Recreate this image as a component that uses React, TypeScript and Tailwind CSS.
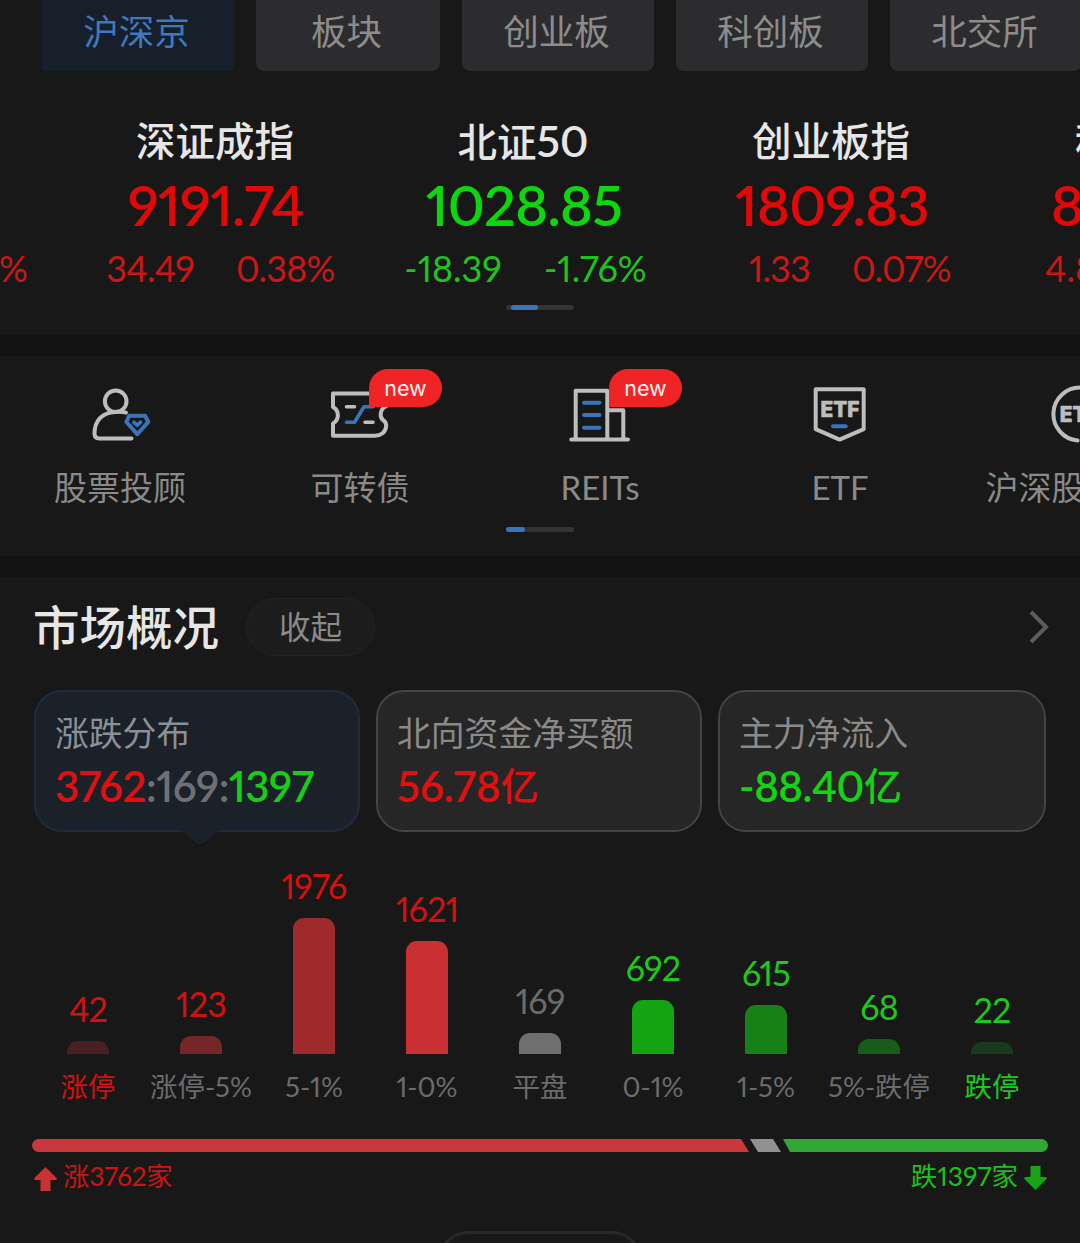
import React from 'react';
import clsx from 'clsx';

const tabs = [
  { label: '沪深京', width: 'w-[192px]', active: true },
  { label: '板块', width: 'w-[184px]' },
  { label: '创业板', width: 'w-[192px]' },
  { label: '科创板', width: 'w-[192px]' },
  { label: '北交所', width: 'w-[192px]' },
];

const indices = [
  { name: '深证成指', value: '9191.74', change: '34.49', percent: '0.38%', up: true },
  {
    name: <>北证<span className="text-[43px] font-semibold">50</span></>,
    value: '1028.85',
    change: '-18.39',
    percent: '-1.76%',
    up: false,
  },
  { name: '创业板指', value: '1809.83', change: '1.33', percent: '0.07%', up: true },
];

const bars = [
  { label: '涨停', count: 42, height: 13, bar: 'bg-[#481f22]', text: 'text-[#d51010]', labelText: 'text-[#d51010]' },
  { label: '涨停-5%', count: 123, height: 18, bar: 'bg-[#752628]', text: 'text-[#d51010]', labelText: 'text-[#6b6b6b]' },
  { label: '5-1%', count: 1976, height: 136, bar: 'bg-[#9f2a2c]', text: 'text-[#d51010]', labelText: 'text-[#6b6b6b]' },
  { label: '1-0%', count: 1621, height: 113, bar: 'bg-[#ca3031]', text: 'text-[#d51010]', labelText: 'text-[#6b6b6b]' },
  { label: '平盘', count: 169, height: 21, bar: 'bg-[#6f6f6f]', text: 'text-[#6b6b6b]', labelText: 'text-[#6b6b6b]' },
  { label: '0-1%', count: 692, height: 54, bar: 'bg-[#13a313]', text: 'text-[#1cc91c]', labelText: 'text-[#6b6b6b]' },
  { label: '1-5%', count: 615, height: 49, bar: 'bg-[#178017]', text: 'text-[#1cc91c]', labelText: 'text-[#6b6b6b]' },
  { label: '5%-跌停', count: 68, height: 15, bar: 'bg-[#185c19]', text: 'text-[#1cc91c]', labelText: 'text-[#6b6b6b]' },
  { label: '跌停', count: 22, height: 12, bar: 'bg-[#193a1b]', text: 'text-[#1cc91c]', labelText: 'text-[#1cc91c]' },
];

const iconProps = {
  width: 72,
  height: 64,
  viewBox: '0 0 72 64',
  fill: 'none',
  stroke: '#bdbdbd',
  strokeWidth: 4,
  strokeLinecap: 'round' as const,
  strokeLinejoin: 'round' as const,
};

const AdvisorIcon = () => (
  <svg {...iconProps}>
    <circle cx="31.7" cy="19.3" r="10.8" />
    <path d="M42 30.6 C39 29.6 36 29.8 31.5 29.9 C18 30.3 10.6 39 10.5 51.5 Q10.5 56.4 15.5 56.4 H47.5" />
    <path d="M45.2 33.8 H61.2 L64.3 40 L53.3 52.2 L42.3 40 Z" stroke="#3a74b9" />
    <path d="M50 40.3 L53.2 43.2 L56.4 40.3" stroke="#3a74b9" strokeWidth="3.8" />
  </svg>
);

const BondIcon = () => (
  <svg {...iconProps}>
    <path d="M62 24.5 C55.5 27 55.5 35.5 59 38 C62 40 62.6 42 62 45 C61.5 50 57 53.8 51 53.8 H9 V41.5 C15.5 38 15.5 28.5 9 25 V11.5 H62" />
    <path d="M22.5 24.7 H30.5 M41 40.3 H49" strokeWidth="3.6" />
    <path d="M22.5 40.3 H30.5 L40 24.7 H49" stroke="#3a74b9" strokeWidth="3.6" />
  </svg>
);

const ReitsIcon = () => (
  <svg {...iconProps}>
    <path d="M11.7 57.3 V8.7 H43.3 V57.3 M43.3 28.3 H59.3 V57.3 M7.2 57.5 H64" />
    <path d="M20 20.7 H35.5 M20 33 H35.5 M20 45.7 H35.5" stroke="#3a74b9" />
  </svg>
);

const EtfIcon = () => (
  <svg {...iconProps}>
    <path d="M11.7 7.3 H59.7 V47.2 L35.6 57.6 L11.7 47.2 Z" />
    <path d="M29 44.3 H41.7" stroke="#3a74b9" />
    <text x="16.5" y="35.2" textLength="39" lengthAdjust="spacingAndGlyphs" className="font-['Inter'] text-[22px] font-extrabold" fill="#bdbdbd" stroke="#bdbdbd" strokeWidth="0.7">
      ETF
    </text>
  </svg>
);

const ConnectEtfIcon = () => (
  <svg {...iconProps}>
    <path d="M33.6 58.6 A26.6 26.6 0 1 1 62.6 32.3" />
    <text x="15.8" y="40.3" textLength="39" lengthAdjust="spacingAndGlyphs" className="font-['Inter'] text-[22px] font-extrabold" fill="#bdbdbd" stroke="#bdbdbd" strokeWidth="0.7">
      ETF
    </text>
  </svg>
);

const entries = [
  { label: '股票投顾', icon: <AdvisorIcon /> },
  { label: '可转债', icon: <BondIcon />, isNew: true },
  { label: 'REITs', icon: <ReitsIcon />, isNew: true },
  { label: 'ETF', icon: <EtfIcon /> },
  { label: '沪深股通ETF', icon: <ConnectEtfIcon /> },
];

const Divider = () => <div className="h-[21px] shrink-0 bg-[#121212]" />;

const App = () => {
  return (
    <div className="w-[1080px] h-[1243px] overflow-hidden flex flex-col bg-[#181818] font-['Lato','Noto_Sans_CJK_SC',sans-serif] [font-variant-numeric:proportional-nums] whitespace-nowrap">
      {/* Market tabs */}
      <div className="flex gap-[22px] pl-[42px] h-[71px] shrink-0">
        {tabs.map((tab) => (
          <div
            key={tab.label}
            className={clsx(
              'shrink-0 h-[71px] pr-[3px] text-center text-[35.5px] leading-[63px]',
              tab.width,
              tab.active ? 'rounded-b bg-[#17202a] text-[#3f78bf]' : 'rounded-b-lg bg-[#2c2c2e] text-[#8c8c8c]'
            )}
          >
            {tab.label}
          </div>
        ))}
      </div>

      {/* Index quotes */}
      <div className="h-[264px] shrink-0 flex flex-col items-center">
        <div className="w-full flex pt-[43px]">
          <div className="w-[61px] shrink-0 pt-[130px] text-[36px] leading-[48px] text-[#cb1616]">
            <span className="-ml-[1px]">%</span>
          </div>
          {indices.map((item) => (
            <div key={item.value} className="w-[308px] shrink-0 text-center">
              <div className="h-[54px] text-[39.5px] leading-[54px] font-medium text-[#e6e6e6]">{item.name}</div>
              <div
                className={clsx(
                  'pl-[2px] text-[56px] leading-[74px] font-semibold tracking-[-0.7px]',
                  item.up ? 'text-[#e30808]' : 'text-[#0cd60c]'
                )}
              >
                {item.value}
              </div>
              <div
                className={clsx(
                  'mt-[2px] grid grid-cols-2 gap-[42px] text-[36px] leading-[48px]',
                  item.up ? 'text-[#cb1616] tracking-[-0.8px]' : 'text-[#1fc31f]'
                )}
              >
                <span className="text-right">{item.change}</span>
                <span className="text-left">{item.percent}</span>
              </div>
            </div>
          ))}
          <div className="w-[95px] shrink-0 overflow-hidden">
            <div className="pl-[90px] text-[39.5px] leading-[54px] font-medium text-[#e6e6e6]">科</div>
            <div className="pl-[66px] text-[56px] leading-[74px] font-semibold text-[#e30808]">8</div>
            <div className="mt-[2px] pl-[60px] text-[36px] leading-[48px] text-[#cb1616]">4.8</div>
          </div>
        </div>
        <div className="mt-[13px] w-[68px] h-[5px] rounded-full bg-[#333333] pl-[5px]">
          <div className="w-[27px] h-full rounded-full bg-[#3a74b9]" />
        </div>
      </div>

      <Divider />

      {/* Shortcuts */}
      <div className="h-[200px] shrink-0 flex flex-col items-center">
        <div className="w-full flex pt-[26px]">
          {entries.map((entry) => (
            <div key={entry.label} className="w-[240px] shrink-0 flex flex-col items-center">
              <div className="relative">
                {entry.icon}
                {entry.isNew && (
                  <span className="absolute left-[45px] -top-[13px] w-[73px] h-[38px] rounded-full rounded-bl-none bg-[#f12425] text-center font-['Inter'] text-[21.5px] leading-[39px] text-[#ffeeee]">
                    new
                  </span>
                )}
              </div>
              <div className="mt-[17px] text-[33px] leading-[48px] text-[#8a8a8a]">{entry.label}</div>
            </div>
          ))}
        </div>
        <div className="mt-[16px] w-[68px] h-[5px] rounded-full bg-[#333333]">
          <div className="w-[19px] h-full rounded-full bg-[#3a74b9]" />
        </div>
      </div>

      <Divider />

      {/* Market overview */}
      <div className="flex-1 flex flex-col pt-[21px]">
        <div className="flex items-center h-[58px] pl-[33px] pr-[31px]">
          <h2 className="w-[213px] text-[46.5px] leading-[58px] font-medium text-[#e6e6e6]">市场概况</h2>
          <button className="w-[129px] h-[58px] rounded-full border border-[#232323] bg-[#1c1c1c] text-[31.5px] leading-[56px] text-[#8a8a8a]">
            收起
          </button>
          <svg className="ml-auto" width="20" height="34" viewBox="0 0 20 34" fill="none" stroke="#5c5c5c" strokeWidth="4">
            <path d="M2 2 L17 17 L2 32" />
          </svg>
        </div>

        <div className="mt-[34px] ml-[34px] flex gap-4 text-[33.8px] leading-[48px]">
          <div className="relative w-[326px] h-[142px] rounded-[28px] border-2 border-[#202c3d] bg-[#1a2128] pl-[19px] pt-[17px] text-[#8b9097]">
            <div>涨跌分布</div>
            <div className="mt-[3px] text-[42px] leading-[52px] font-semibold tracking-[-0.5px] text-[#6d7176]">
              <span className="text-[#e01010]">3762</span>:169:<span className="text-[#1acb1a]">1397</span>
            </div>
            <svg className="absolute left-[146px] top-[137px]" width="36" height="18" viewBox="0 0 36 18">
              <path d="M0 0 H36 V2 Q34 2 32 4 L21 14 Q18 16 15 14 L4 4 Q2 2 0 2 Z" fill="#1a2128" />
              <path d="M1 2 Q3 2.4 5 4.5 L15 13.5 Q18 15.5 21 13.5 L31 4.5 Q33 2.4 35 2" fill="none" stroke="#1c2531" strokeWidth="1.5" />
            </svg>
          </div>
          <div className="w-[326px] h-[142px] rounded-[28px] border-2 border-[#444444] bg-[#262626] pl-[19px] pt-[17px] text-[#8a8a8a]">
            <div>北向资金净买额</div>
            <div className="flex mt-[3px] text-[42px] leading-[52px] font-semibold text-[#e01010]">
              56.78<span className="text-[38px] leading-[51px] font-medium">亿</span>
            </div>
          </div>
          <div className="w-[328px] h-[142px] rounded-[28px] border-2 border-[#444444] bg-[#262626] pl-[19px] pt-[17px] text-[#8a8a8a]">
            <div>主力净流入</div>
            <div className="flex mt-[3px] text-[42px] leading-[52px] font-semibold tracking-[-0.5px] text-[#14d214]">
              -88.40<span className="text-[38px] leading-[51px] font-medium">亿</span>
            </div>
          </div>
        </div>

        {/* Distribution chart */}
        <div className="h-[280px] pl-[31.5px] flex items-end">
          {bars.map((item) => (
            <div key={item.label} className="w-[113px] shrink-0 flex flex-col items-center">
              <div className={clsx('text-[34px] leading-[44px] tracking-[-0.8px]', item.text)}>{item.count}</div>
              <div className={clsx('mt-[10px] w-[42px] rounded-t-[11px]', item.bar)} style={{ height: item.height }} />
              <div className={clsx('mt-[8px] text-[27.4px] leading-[50px]', item.labelText)}>{item.label}</div>
            </div>
          ))}
        </div>

        {/* Rise / fall ratio */}
        <div className="mt-[27px] ml-8 flex h-[13px]">
          <div className="w-[717px] rounded-l-full bg-[#c9393b] [clip-path:polygon(0_0,709px_0,100%_100%,0_100%)]" />
          <div className="ml-[1px] w-[31px] bg-[#919191] [clip-path:polygon(0_0,23px_0,100%_100%,8px_100%)]" />
          <div className="ml-[2px] w-[265px] rounded-r-full bg-[#31a735] [clip-path:polygon(0_0,100%_0,100%_100%,7px_100%)]" />
        </div>
        <div className="flex items-center justify-between mt-[4px] pl-[34px] pr-[33px] h-[40px] text-[26.5px] leading-[40px]">
          <div className="flex items-center gap-[6px] tracking-[-0.3px] text-[#cb1414]">
            <svg className="mt-[5px]" width="23" height="24" viewBox="0 0 23 24" fill="#c93335">
              <path d="M11.5 0 L23 11.5 Q23 13 21 13 H16.5 V24 H6.5 V13 H2 Q0 13 0 11.5 Z" />
            </svg>
            涨3762家
          </div>
          <div className="flex items-center gap-[6px] text-[#1cc01c]">
            跌1397家
            <svg className="mt-[3px]" width="23" height="24" viewBox="0 0 23 24" fill="#16a416">
              <path d="M11.5 24 L23 12.5 Q23 11 21 11 H16.5 V0 H6.5 V11 H2 Q0 11 0 12.5 Z" />
            </svg>
          </div>
        </div>
        <div className="mt-[35px] mx-auto w-[204px] h-[60px] shrink-0 rounded-[30px] border-[3px] border-[#282828]" />
      </div>
    </div>
  );
};

export default App;
